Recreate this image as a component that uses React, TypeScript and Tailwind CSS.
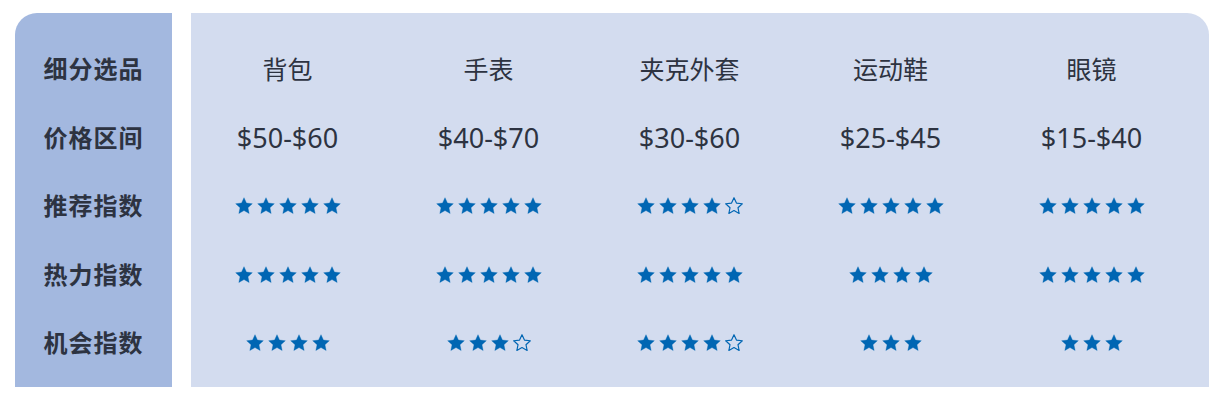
const labels = ["细分选品", "价格区间", "推荐指数", "热力指数", "机会指数"];

interface Item {
  name: string;
  price: string;
  recommend: number[];
  heat: number[];
  chance: number[];
}

// [filled, empty]
const items: Item[] = [
  { name: "背包", price: "$50-$60", recommend: [5, 0], heat: [5, 0], chance: [4, 0] },
  { name: "手表", price: "$40-$70", recommend: [5, 0], heat: [5, 0], chance: [3, 1] },
  { name: "夹克外套", price: "$30-$60", recommend: [4, 1], heat: [5, 0], chance: [4, 1] },
  { name: "运动鞋", price: "$25-$45", recommend: [5, 0], heat: [4, 0], chance: [3, 0] },
  { name: "眼镜", price: "$15-$40", recommend: [5, 0], heat: [5, 0], chance: [3, 0] },
];

const STAR =
  "M12 2L14.94 8.46L21.99 9.26L16.76 14.05L18.17 20.99L12 17.5L5.83 20.99L7.24 14.05L2.01 9.26L9.06 8.46Z";

function Star({ filled }: { filled: boolean }) {
  return (
    <svg viewBox="0 0 24 24" className="w-[20px] h-[20px] mx-[1px]">
      <path
        d={STAR}
        fill={filled ? "#0066b3" : "none"}
        stroke="#0066b3"
        strokeWidth={filled ? 0.4 : 1.4}
        strokeLinejoin="round"
      />
    </svg>
  );
}

function Stars({ v }: { v: number[] }) {
  const list = [
    ...Array(v[0]).fill(true),
    ...Array(v[1]).fill(false),
  ] as boolean[];
  return (
    <div className="flex items-center justify-center">
      {list.map((f, i) => (
        <Star key={i} filled={f} />
      ))}
    </div>
  );
}

const cell = "h-[68.5px] flex items-center justify-center";

export default function App() {
  return (
    <div
      className="w-[1224px] h-[400px] bg-white flex pt-[13px] pl-[15px] gap-[19px]"
      style={{ fontFamily: '"Noto Sans", "Noto Sans CJK SC", sans-serif' }}
    >
      {/* labels */}
      <div className="w-[157px] h-[374px] bg-[#a3b8df] rounded-tl-[22px] pt-[22px]">
        {labels.map((l) => (
          <div
            key={l}
            className={`${cell} text-[24px] font-bold text-[#2d3341] tracking-[1px]`}
          >
            {l}
          </div>
        ))}
      </div>

      {/* data */}
      <div className="w-[1018px] h-[374px] bg-[#d3dcef] rounded-tr-[22px] pt-[22px]">
        <div className="grid grid-cols-[repeat(5,201px)] -ml-[4px] text-[#2d3341]">
          {items.map((it) => (
            <div key={it.name} className="flex flex-col">
              <div className={`${cell} text-[25px]`}>{it.name}</div>
              <div className={`${cell} text-[27px]`}>{it.price}</div>
              <div className={cell}>
                <Stars v={it.recommend} />
              </div>
              <div className={cell}>
                <Stars v={it.heat} />
              </div>
              <div className={cell}>
                <Stars v={it.chance} />
              </div>
            </div>
          ))}
        </div>
      </div>
    </div>
  );
}
